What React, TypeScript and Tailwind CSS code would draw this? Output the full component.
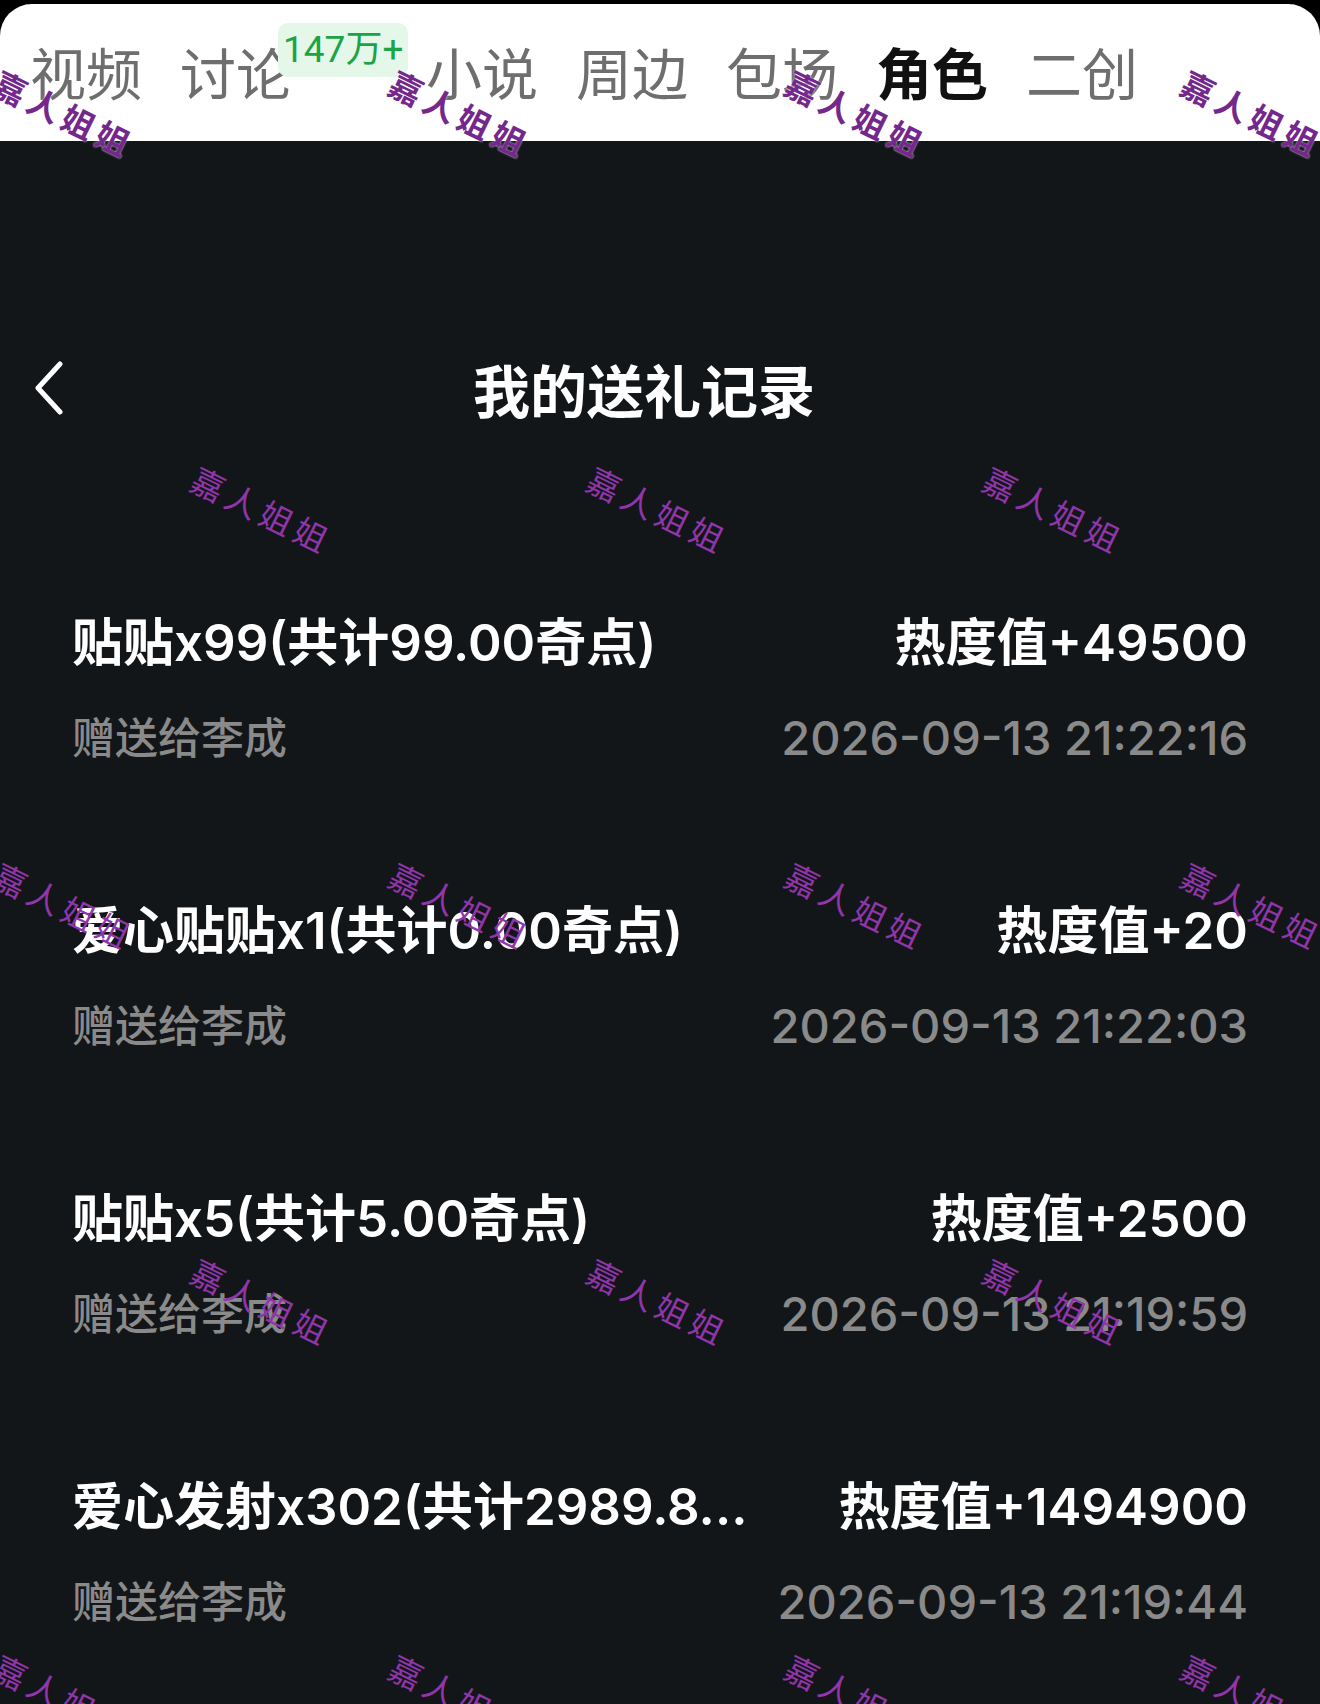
import clsx from "clsx";

const tabs = ["视频", "讨论", "小说", "周边", "包场", "角色", "二创"];

const records = [
  { title: "贴贴x99(共计99.00奇点)", heat: "热度值+49500", to: "李成", time: "2026-09-13 21:22:16" },
  { title: "爱心贴贴x1(共计0.00奇点)", heat: "热度值+20", to: "李成", time: "2026-09-13 21:22:03" },
  { title: "贴贴x5(共计5.00奇点)", heat: "热度值+2500", to: "李成", time: "2026-09-13 21:19:59" },
  { title: "爱心发射x302(共计2989.8...", heat: "热度值+1494900", to: "李成", time: "2026-09-13 21:19:44" },
];

// watermark grid, every other row shifted by half a step
const marks: { x: number; y: number; head: boolean }[] = [];
for (let r = 0; r < 5; r++) {
  const y = 114 + r * 396;
  const xs = r % 2 === 0 ? [64, 460, 856, 1252] : [262, 658, 1054];
  xs.forEach((x) => marks.push({ x, y, head: r === 0 }));
}

const Watermarks = () => (
  <div className="pointer-events-none absolute inset-0 overflow-hidden">
    {marks.map((m, i) => (
      <div key={i} className="absolute" style={{ left: m.x, top: m.y }}>
        <div
          className={clsx(
            "-translate-x-1/2 -translate-y-1/2 rotate-[26deg] whitespace-nowrap text-[33px] leading-none tracking-[5px] font-['Noto_Sans_CJK_SC',sans-serif]",
            m.head
              ? "font-bold text-[#74288c] [text-shadow:0_0_2px_rgba(255,255,255,0.9)]"
              : "text-[#9035aa]"
          )}
        >
          嘉人姐姐
        </div>
      </div>
    ))}
  </div>
);

export default function App() {
  return (
    <div className="relative flex h-[1704px] w-[1320px] flex-col overflow-hidden bg-black pt-[4px] font-['Inter','Noto_Sans_CJK_SC',sans-serif]">
      {/* top tab bar */}
      <div className="h-[137px] shrink-0 rounded-t-[32px] bg-white">
        <div className="flex h-full items-center gap-[38px] pb-[4px] pl-[30px] font-['Noto_Sans_CJK_SC',sans-serif] text-[56px] leading-none">
          {tabs.map((t) => (
            <div
              key={t}
              className={clsx(
                "relative",
                t === "讨论" && "mr-[96px]",
                t === "角色" ? "font-bold text-[#111]" : "text-[#6e6e6e]"
              )}
            >
              {t}
              {t === "讨论" && (
                <span className="absolute left-[98px] top-[-20px] flex h-[54px] items-center whitespace-nowrap rounded-[10px] bg-[#e4f7e8] px-[5px] font-['Roboto','Noto_Sans_CJK_SC',sans-serif] text-[37px] leading-none font-normal text-[#19a445]">
                  147万+
                </span>
              )}
            </div>
          ))}
        </div>
      </div>

      {/* page body */}
      <div className="flex-1 bg-[#131619] pt-[197px]">
        <div className="flex h-[100px] items-center">
          <div className="flex w-[100px] items-center pl-[34px]">
            <svg width="30" height="54" viewBox="0 0 30 54" fill="none">
              <path d="M26 3 L4 27 L26 51" stroke="white" strokeWidth="5" strokeLinecap="round" strokeLinejoin="round" />
            </svg>
          </div>
          <h1 className="flex-1 text-center font-['Noto_Sans_CJK_SC',sans-serif] text-[57px] font-bold leading-none text-white">
            我的送礼记录
          </h1>
          <div className="w-[132px]" />
        </div>

        <div className="mt-[175px] flex flex-col gap-[138px] px-[72px]">
          {records.map((r) => (
            <div key={r.time} className="flex flex-col gap-[40px]">
              <div className="flex h-[60px] items-center justify-between text-[51px] font-semibold leading-[64px] text-white">
                <span className="min-w-0 flex-1 truncate">{r.title}</span>
                <span className="ml-[60px] shrink-0">{r.heat}</span>
              </div>
              <div className="flex h-[50px] items-center justify-between font-medium leading-[58px] text-[#8a8a8a]">
                <span className="text-[43px]">赠送给{r.to}</span>
                <span className="text-[47px]">{r.time}</span>
              </div>
            </div>
          ))}
        </div>
      </div>

      <Watermarks />
    </div>
  );
}
